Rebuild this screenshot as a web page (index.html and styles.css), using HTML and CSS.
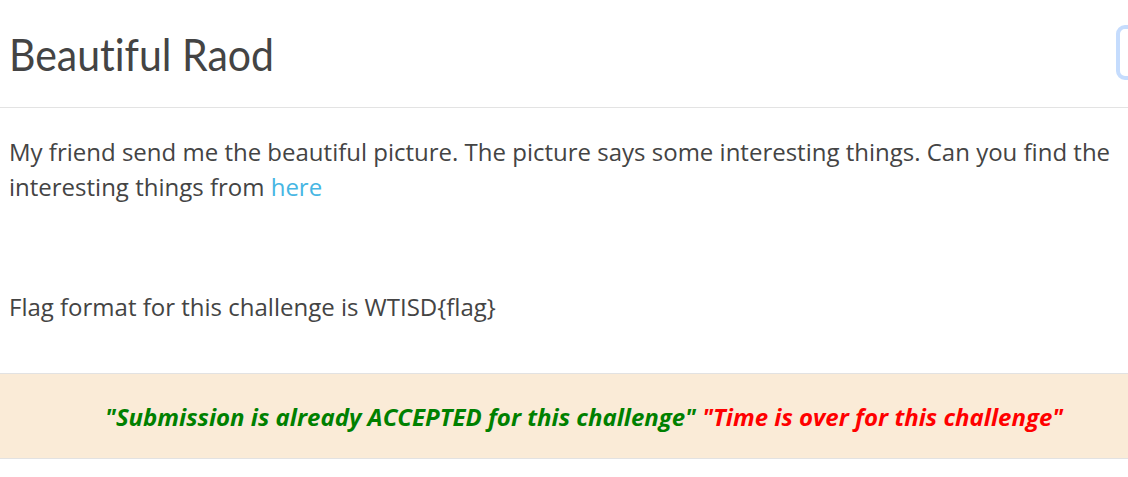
FILE: index.html
```html
<!DOCTYPE html>
<html>
<head>
<meta charset="utf-8">
<link rel="stylesheet" href="styles.css">
</head>
<body>
<div class="modal">
  <div class="modal-header">
    <h3 class="title">Beautiful Raod</h3>
    <button class="close" aria-label="Close"></button>
  </div>
  <div class="modal-body">
    <p class="desc">My friend send me the beautiful picture. The picture says some interesting things. Can you find the interesting things from <a href="#">here</a></p>
    <p class="desc flag">Flag format for this challenge is WTISD{flag}</p>
  </div>
  <div class="notice">
    <div class="notice-text"><span class="ok">"Submission is already ACCEPTED for this challenge"</span> <span class="over">"Time is over for this challenge"</span></div>
  </div>
</div>
</body>
</html>
```
FILE: styles.css
```css
html, body {
  margin: 0;
  padding: 0;
  background: #fff;
}
.modal {
  width: 1128px;
  font-family: "Open Sans", "Noto Sans", sans-serif;
  color: #444;
}
.modal-header {
  position: relative;
  height: 107px;
  border-bottom: 1px solid #e3e3e3;
  display: flex;
  align-items: center;
  padding-left: 9px;
  box-sizing: content-box;
}
.title {
  margin: 0;
  font-family: "Lato", sans-serif;
  font-weight: 400;
  font-size: 41px;
  color: #444;
  font-variant-ligatures: none;
  transform: scaleY(1.1);
  transform-origin: left center;
}
.close {
  position: absolute;
  left: 1116px;
  top: 25px;
  width: 40px;
  height: 55px;
  border: 4px solid #c5dcfd;
  border-radius: 9px;
  background: transparent;
  box-sizing: border-box;
  padding: 0;
}
.modal-body {
  padding: 26px 9px 0;
}
.desc {
  margin: 0;
  font-size: 24px;
  line-height: 35px;
}
.desc a {
  color: #46b6e3;
  text-decoration: none;
}
.flag {
  margin-top: 85px;
}
.notice {
  margin-top: 49px;
  height: 84px;
  background: #faebd7;
  border-top: 1px solid #e2e2e2;
  border-bottom: 1px solid #e2e2e2;
  display: flex;
  align-items: center;
  padding-left: 105px;
}
.notice-text {
  font-size: 24px;
  font-weight: 700;
  font-style: italic;
  white-space: nowrap;
}
.ok {
  color: #008000;
}
.over {
  color: #ff0000;
}
```
